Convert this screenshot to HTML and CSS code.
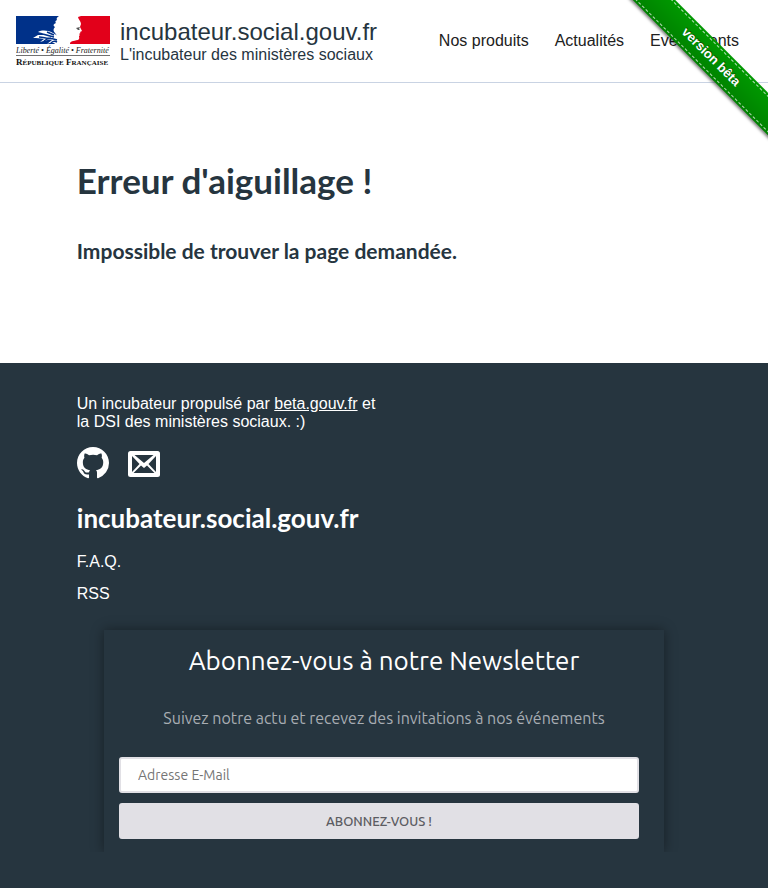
FILE: index.html
```html
<!DOCTYPE html>
<html lang="fr">
<head>
<meta charset="utf-8">
<meta name="viewport" content="width=device-width, initial-scale=1">
<title>incubateur.social.gouv.fr</title>
<link rel="stylesheet" href="styles.css">
</head>
<body>
<header class="site-header">
  <a class="brand" href="#">
    <svg class="brand-logo" viewBox="0 0 94 50" role="img" aria-label="République Française">
      <path fill="#003189" d="M0 0H43C41 1 40 3 41 4C39 5 39 6 40 7C37 8 37 10 39 11C37 13 37 15 39 17C41 19 42 22 41 25L40 28H0Z"/>
      <path fill="#fff" d="M22 16C26 14 31 14 37 17L42 20L42 28H39C37 26 34 27 31 28L36 24C33 23 28 25 24 26L28 23C24 22 21 22 17 22L22 19L28 19L26 17Z"/>
      <path fill="none" stroke="#003189" stroke-width="1.5" d="M25 18C29 18 32 20 38 21M23 21C28 21 31 23 35 22M28 25C33 21 37 23 41 24M31 16L38 19M35 27C37 25 39 25 41 26"/>
      <path fill="#e2001a" d="M65 0H94V28H54C54 25 57 25 62 24C64 23 63 21 63 20L64 19L63 18L64.500 17L64 16L66 15L64 11L65 8C65 5 62 3 62 1Z"/>
      <path fill="#555" d="M60 12L64 11L63 13L64 14H62Z"/>
      <text class="motto" x="0" y="37" font-size="8">Liberté • Égalité • Fraternité</text>
      <path stroke="#333" stroke-width="0.7" d="M0 39.5H94"/>
      <text class="republic" x="0" y="49" font-size="9">R<tspan font-size="7">ÉPUBLIQUE</tspan> F<tspan font-size="7">RANÇAISE</tspan></text>
    </svg>
    <span class="brand-text">
      <span class="brand-name">incubateur.social.gouv.fr</span>
      <span class="brand-tagline">L'incubateur des ministères sociaux</span>
    </span>
  </a>
  <nav class="main-nav">
    <a href="#">Nos produits</a>
    <a href="#">Actualités</a>
    <a href="#">Evénements</a>
  </nav>
</header>
<div class="ribbon-corner"><a class="ribbon" href="#"><span class="ribbon-label">version bêta</span></a></div>

<main class="content">
  <h1>Erreur d'aiguillage !</h1>
  <h2>Impossible de trouver la page demandée.</h2>
</main>

<footer class="site-footer">
  <p class="credit">Un incubateur propulsé par <a href="#">beta.gouv.fr</a> et<br>la DSI des ministères sociaux. :)</p>
  <div class="social">
    <a href="#" aria-label="GitHub">
      <svg class="icon-github" viewBox="0 0 16 16"><path fill="#fff" fill-rule="evenodd" d="M8 0C3.58 0 0 3.58 0 8c0 3.54 2.29 6.53 5.47 7.59.4.07.55-.17.55-.38 0-.19-.01-.82-.01-1.49-2.01.37-2.53-.49-2.69-.94-.09-.23-.48-.94-.82-1.13-.28-.15-.68-.52-.01-.53.63-.01 1.08.58 1.23.82.72 1.21 1.87.87 2.33.66.07-.52.28-.87.51-1.07-1.78-.2-3.64-.89-3.64-3.95 0-.87.31-1.59.82-2.15-.08-.2-.36-1.02.08-2.12 0 0 .67-.21 2.2.82.64-.18 1.32-.27 2-.27s1.36.09 2 .27c1.53-1.04 2.2-.82 2.2-.82.44 1.1.16 1.92.08 2.12.51.56.82 1.27.82 2.15 0 3.07-1.87 3.75-3.65 3.95.29.25.54.73.54 1.48 0 1.07-.01 1.93-.01 2.2 0 .21.15.46.55.38A8.01 8.01 0 0 0 16 8c0-4.42-3.58-8-8-8z"/></svg>
    </a>
    <a href="#" aria-label="E-mail">
      <svg class="icon-mail" viewBox="0 0 32 26"><rect width="32" height="26" rx="2.5" fill="#fff"/><path fill="#26353f" d="M6.500 4H25.500L16 12ZM4 5L11.500 13L4 21ZM28 5L20.500 13L28 21ZM5.500 22L13 14.500L16 17L19 14.500L26.500 22Z"/></svg>
    </a>
  </div>
  <h3>incubateur.social.gouv.fr</h3>
  <ul class="footer-links">
    <li><a href="#">F.A.Q.</a></li>
    <li><a href="#">RSS</a></li>
  </ul>
  <section class="newsletter-frame">
    <form class="newsletter">
      <h4>Abonnez-vous à notre Newsletter</h4>
      <p>Suivez notre actu et recevez des invitations à nos événements</p>
      <input type="email" placeholder="Adresse E-Mail" aria-label="Adresse E-Mail">
      <button type="submit">Abonnez-vous !</button>
    </form>
  </section>
</footer>
</body>
</html>
```
FILE: styles.css
```css
* { box-sizing: border-box; }

body {
  margin: 0;
  min-height: 100vh;
  display: flex;
  flex-direction: column;
  overflow-x: hidden;
  background: #fff;
  color: #26353f;
  font-family: "Liberation Sans", Arial, sans-serif;
  font-size: 16px;
  line-height: 18px;
}

a { color: inherit; text-decoration: none; }

.site-header {
  display: flex;
  justify-content: space-between;
  align-items: center;
  padding: 16px 29px 16px 16px;
  border-bottom: 1px solid #c9d3e3;
}

.brand { display: flex; align-items: center; gap: 10px; }
.brand-logo { width: 94px; height: 50px; }
.motto { font-family: "Liberation Serif", serif; font-style: italic; fill: #222; }
.republic { font-family: "Liberation Serif", serif; font-weight: 700; fill: #111; }
.brand-text { display: flex; flex-direction: column; }
.brand-name { font-size: 24px; line-height: 28px; }
.brand-tagline { line-height: 18px; }

.main-nav { display: flex; gap: 26px; color: #212121; }

.ribbon-corner {
  position: absolute;
  top: 0;
  right: 0;
  width: 157px;
  height: 157px;
  overflow: hidden;
  pointer-events: none;
}

.ribbon {
  position: absolute;
  top: 42px;
  right: -43px;
  width: 200px;
  padding: 2px 0;
  background: #090 linear-gradient(rgba(0, 0, 0, 0), rgba(0, 0, 0, 0.15));
  box-shadow: 0 2px 3px rgba(0, 0, 0, 0.5);
  color: #fff;
  font-size: 13px;
  font-weight: 700;
  line-height: 24px;
  text-align: center;
  text-shadow: 0 -1px rgba(0, 0, 0, 0.5);
  transform: rotate(45deg);
  pointer-events: auto;
}

.ribbon-label {
  display: block;
  border: dashed rgba(255, 255, 255, 0.7);
  border-width: 1px 0;
}

.content { padding: 77px 10% 97px; }

h1, h2, h3 {
  margin: 0;
  font-family: "Trebuchet MS", Lato, sans-serif;
  font-weight: 700;
}

h1 { font-size: 35px; line-height: 40px; }
h2 { margin-top: 36px; font-size: 21px; line-height: 30px; }

.site-footer {
  flex: 1;
  padding: 32px 10% 36px;
  background: #26353f;
  color: #fff;
}

.credit { margin: 0; }
.credit a { text-decoration: underline; }

.social { display: flex; align-items: flex-end; gap: 19px; margin-top: 16px; }
.social a { display: flex; }
.icon-github { width: 32px; height: 32px; }
.icon-mail { width: 32px; height: 26px; margin-bottom: 2px; }

h3 { margin-top: 24px; font-size: 26px; line-height: 30px; }

.footer-links {
  display: flex;
  flex-direction: column;
  gap: 14px;
  margin: 20px 0 0;
  padding: 0;
  list-style: none;
}

.newsletter-frame {
  margin-top: 11px;
  padding-top: 16px;
  overflow: hidden;
}

.newsletter {
  display: flex;
  flex-direction: column;
  max-width: 560px;
  margin: 0 auto;
  padding: 15px 25px 13px 15px;
  box-shadow: 0 0 12px rgba(0, 0, 0, 0.4);
  font-family: Ubuntu, "Noto Sans", sans-serif;
}

.newsletter h4 {
  margin: 0 -10px 0 0;
  font-size: 26px;
  font-weight: 400;
  line-height: 32px;
  text-align: center;
}

.newsletter p {
  margin: 30px -10px 28px 0;
  color: #a8adb3;
  font-size: 16px;
  line-height: 22px;
  text-align: center;
}

.newsletter input,
.newsletter button {
  width: 100%;
  height: 36px;
  border: 2px solid #e1e0e5;
  border-radius: 3px;
  font-family: inherit;
}

.newsletter input { padding: 0 17px; background: #fff; font-size: 14px; }
.newsletter input::placeholder { color: #757575; }

.newsletter button {
  margin-top: 10px;
  background: #e1e0e5;
  color: #5c5c62;
  font-size: 13px;
  font-weight: 500;
  text-transform: uppercase;
}
```
